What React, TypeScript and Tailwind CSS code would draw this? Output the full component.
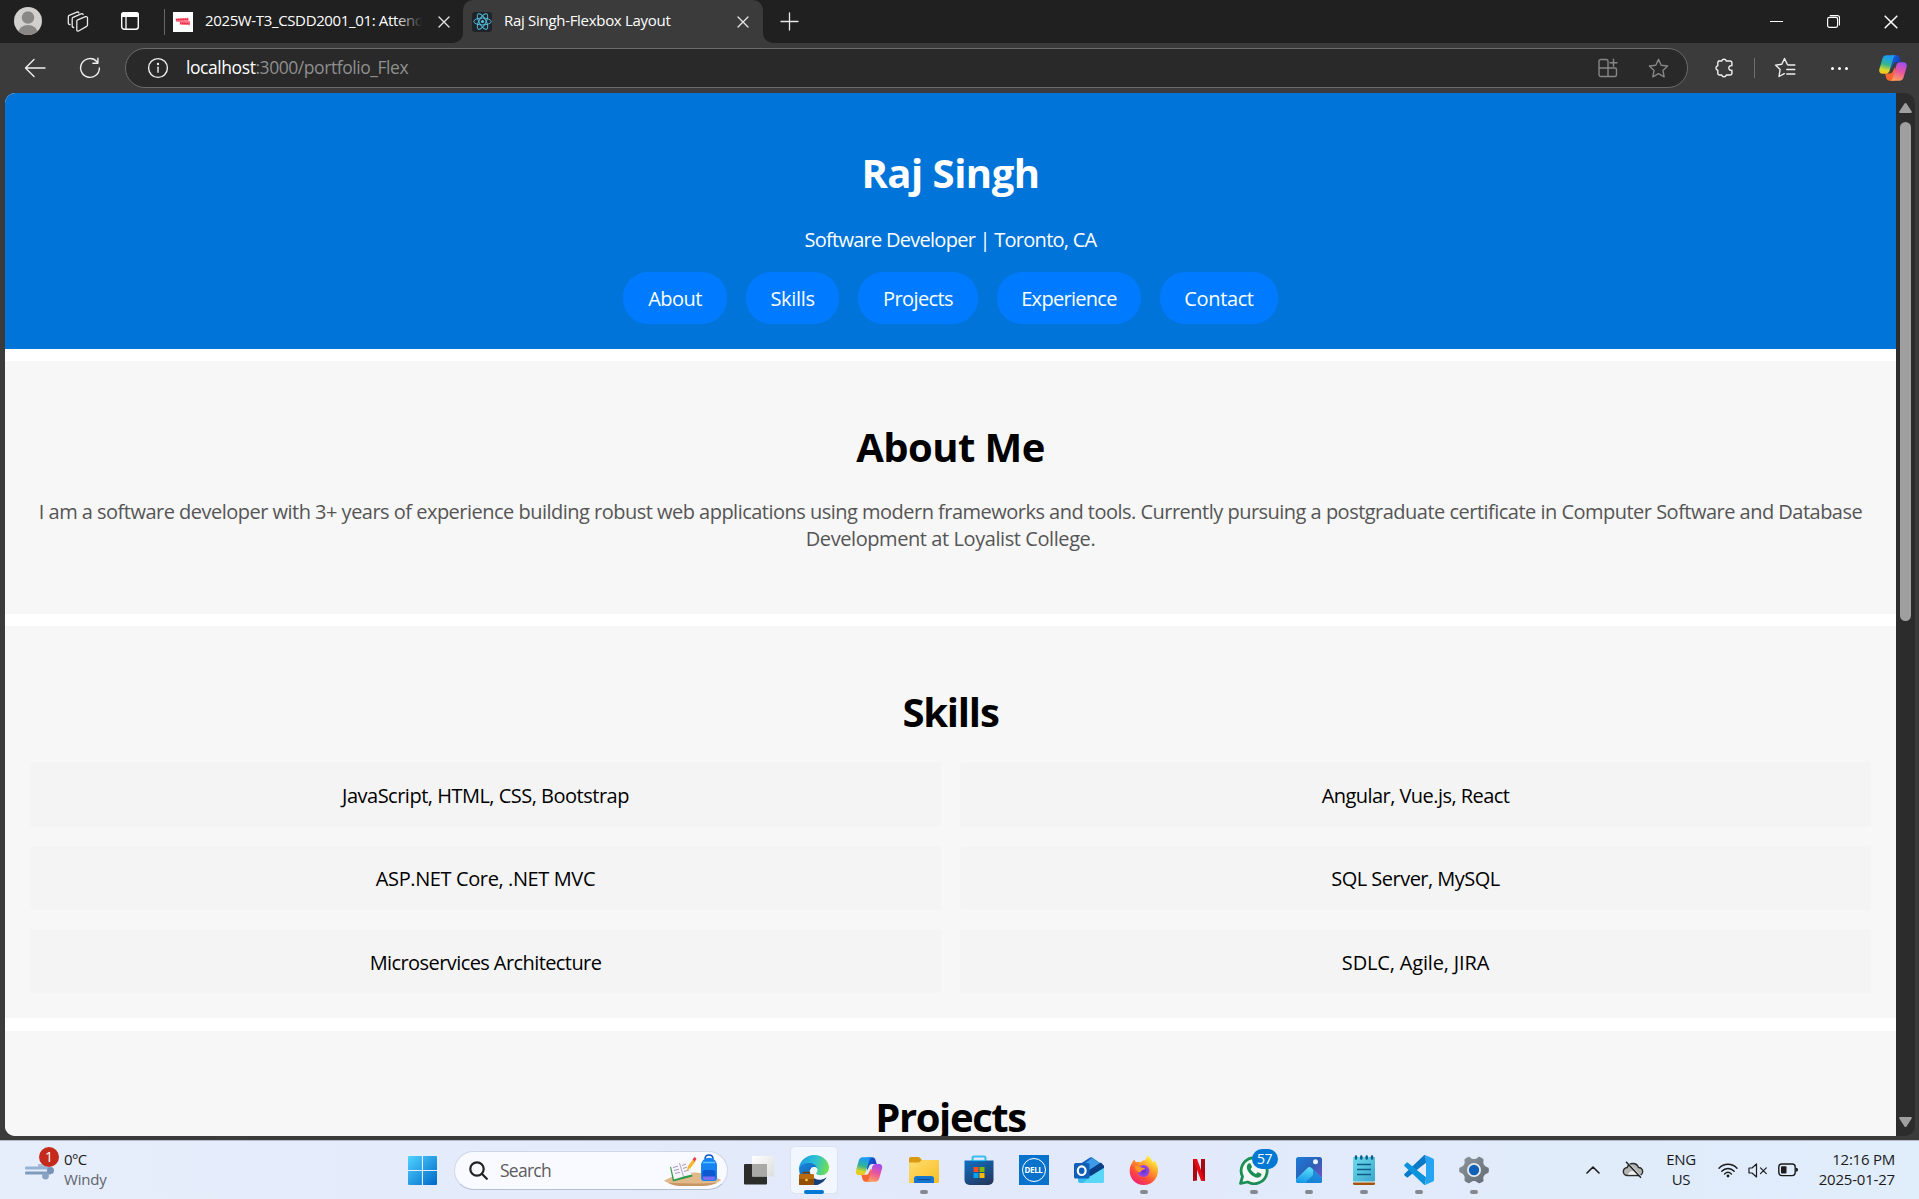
import React from 'react';
import type { ReactNode } from 'react';

/* ---------- Browser chrome icons ---------- */

const stroke = { fill: 'none', stroke: 'currentColor', strokeLinecap: 'round', strokeLinejoin: 'round' } as const;

function Close({ size = 12, className = '' }: { size?: number; className?: string }) {
  return (
    <svg width={size} height={size} viewBox="0 0 12 12" className={className} {...stroke} strokeWidth="1.3">
      <path d="M1 1l10 10M11 1L1 11" />
    </svg>
  );
}

function Workspaces() {
  return (
    <svg width="22" height="22" viewBox="0 0 22 22" {...stroke} strokeWidth="1.3">
      <path d="M9.8 10.1c0-.6.3-1 .9-1.3l7.8-3.1c1-.4 2 .2 2 1.2v7.2c0 .6-.3 1-.9 1.3l-8 4.6c-.9.4-1.8-.1-1.8-1.1z" />
      <path d="M6.7 16.5c-.8 0-1.5-.4-1.5-1.4V7.7c0-.6.3-1.1.9-1.4l8-3.5c.9-.3 1.7 0 2 .8" />
      <path d="M3.1 13.5c-.9 0-1.8-.5-1.8-1.5V5.7c0-.6.3-1.1.9-1.4l7.7-3.2c.9-.3 1.7 0 2 .8" />
    </svg>
  );
}

function TabActions() {
  return (
    <svg width="18" height="18" viewBox="0 0 18 18" className="text-white">
      <rect x=".7" y=".7" width="16.6" height="16.6" rx="2.5" {...stroke} strokeWidth="1.4" />
      <path d="M0 5V3a3 3 0 013-3h12a3 3 0 013 3v2z" fill="currentColor" />
      <path d="M5 5v12" {...stroke} strokeWidth="1.3" />
    </svg>
  );
}

function ReactLogo() {
  return (
    <span className="flex size-5 items-center justify-center rounded-[3px] bg-[#20232a]">
      <svg width="19" height="19" viewBox="-12 -12 24 24" fill="none" stroke="#53c1de" strokeWidth="1.2">
        <circle r="2" fill="#53c1de" stroke="none" />
        <ellipse rx="11" ry="4.3" />
        <ellipse rx="11" ry="4.3" transform="rotate(60)" />
        <ellipse rx="11" ry="4.3" transform="rotate(120)" />
      </svg>
    </span>
  );
}

function CollegeFavicon() {
  return (
    <span className="flex size-5 flex-col items-center justify-center bg-white">
      <svg width="18" height="10" viewBox="0 0 18 10">
        <path d="M1.5 1.5l13-.8v3l1.5.3v4.2L6 7.800V5.200L2 4.500z" fill="#ff7a8c" />
        <path d="M2 2.700l12-.4M6 6l9.500.6" stroke="#e8213f" strokeWidth="1.400" strokeDasharray="1.600 .5" />
      </svg>
    </span>
  );
}

function CopilotLogo({ id, className }: { id: string; className: string }) {
  return (
    <svg viewBox="0 0 28 26" className={className}>
      <defs>
        <linearGradient id={id + 'l'} x1=".5" y1="0" x2=".3" y2="1">
          <stop offset=".1" stopColor="#1c9df0" />
          <stop offset=".5" stopColor="#35b58e" />
          <stop offset=".8" stopColor="#d9d72b" />
          <stop offset="1" stopColor="#f6c31b" />
        </linearGradient>
        <linearGradient id={id + 'r'} x1=".7" y1="0" x2=".4" y2="1">
          <stop offset="0" stopColor="#a04df2" />
          <stop offset=".5" stopColor="#e8559f" />
          <stop offset="1" stopColor="#ff9d5c" />
        </linearGradient>
        <linearGradient id={id + 't'} x1="0" y1="0" x2="1" y2=".6">
          <stop offset="0" stopColor="#1668dd" />
          <stop offset="1" stopColor="#1436b8" />
        </linearGradient>
      </defs>
      <path d="M12 .3h5.500c1.700 0 2.700 1 3.200 2.500l1.300 4.500h-4.500c-2 0-3 1-3.600 3L12 14z" fill={'url(#' + id + 't)'} />
      <path d="M16 25.700h-5.500c-1.700 0-2.700-1-3.200-2.500L6 18.500h4.500c2 0 3-1 3.600-3L16 12z" fill="#f4652f" />
      <path d="M7.500.3H17c-1.700.3-2.400 1.700-3 3.700l-3.300 11.500c-.6 2-1.700 3.200-3.900 3.200H3.500c-2.500 0-3.800-1.900-3.100-4.700L3.300 4C4 1.500 5.300.3 7.500.3z" fill={'url(#' + id + 'l)'} />
      <path d="M20.500 25.700H11c1.700-.3 2.400-1.700 3-3.700l3.300-11.500c.6-2 1.700-3.200 3.900-3.200h3.300c2.500 0 3.800 1.900 3.100 4.700L24.700 22c-.7 2.500-2 3.700-4.200 3.700z" fill={'url(#' + id + 'r)'} />
    </svg>
  );
}

const STAR = 'M10 1.300l2.600 5.600 6.100.7-4.500 4.200 1.200 6.100-5.400-3-5.400 3 1.200-6.100L1.300 7.600l6.100-.7z';

/* ---------- Browser chrome ---------- */

function TabStrip() {
  return (
    <div className="flex h-[43px] bg-[#3b3b3b] text-[#e8e8e8]">
      <div className="flex w-[463px] items-center rounded-br-[10px] bg-[#202020] pl-[14px]">
        <svg width="28" height="28" viewBox="0 0 28 28" className="mb-px">
          <clipPath id="avatar"><circle cx="14" cy="14" r="14" /></clipPath>
          <g clipPath="url(#avatar)">
            <rect width="28" height="28" fill="#d2d0ce" />
            <circle cx="14" cy="10.500" r="6.200" fill="#8a8886" />
            <ellipse cx="14" cy="25.500" rx="9.500" ry="7.500" fill="#8a8886" />
          </g>
        </svg>
        <div className="ml-[25px] flex"><Workspaces /></div>
        <div className="ml-8 flex pb-px"><TabActions /></div>
        <div className="ml-[25px] h-[26px] w-px bg-[#666]" />
        <div className="ml-2 flex"><CollegeFavicon /></div>
        <div className="relative ml-3 w-[224px] overflow-hidden pb-1 text-[15px] leading-5 tracking-[-0.36px] whitespace-nowrap text-white">
          2025W-T3_CSDD2001_01: Attenda
          <div className="absolute inset-y-0 right-0 w-[34px] bg-linear-to-r from-transparent to-[#202020] to-80%" />
        </div>
        <Close className="ml-[9px]" />
      </div>
      <div className="w-[300px] bg-[#202020]">
        <div className="flex h-full items-center rounded-t-[10px] bg-[#3b3b3b] pl-[9px]">
          <ReactLogo />
          <div className="ml-3 w-[233px] pb-1 text-[15px] leading-5 tracking-[-0.3px] whitespace-nowrap text-white">Raj Singh-Flexbox Layout</div>
          <Close />
        </div>
      </div>
      <div className="flex flex-1 items-center rounded-bl-[10px] bg-[#202020] pl-[17px]">
        <svg width="19" height="19" viewBox="0 0 19 19" {...stroke} strokeWidth="1.3" className="mb-px"><path d="M9.500 1v17M1 9.500h17" /></svg>
        <div className="ml-auto flex items-center gap-11 pr-[21px] text-white">
          <div className="h-px w-[13px] bg-white" />
          <svg width="13" height="13" viewBox="0 0 13 13" {...stroke} strokeWidth="1.2">
            <rect x=".6" y="2.4" width="10" height="10" rx="1.8" />
            <path d="M3.200.6h7.300a2 2 0 012 2v7.200" />
          </svg>
          <Close size={14} />
        </div>
      </div>
    </div>
  );
}

function Toolbar() {
  return (
    <div className="flex h-[50px] items-center bg-[#3b3b3b] text-[#f0f0f0]">
      <svg width="22" height="20" viewBox="0 0 22 20" {...stroke} strokeWidth="1.4" className="mb-px ml-6">
        <path d="M21 10H1.500M10 1.500L1.500 10l8.500 8.500" />
      </svg>
      <svg width="22" height="22" viewBox="0 0 22 22" {...stroke} strokeWidth="1.4" className="ml-[33px]">
        <path d="M20.400 11A9.400 9.400 0 1118 4.700M18.900 1.300v5h-5" />
      </svg>
      <div className="ml-6 flex h-10 w-[1563px] items-center rounded-full border border-[#6b6b6b] bg-[#292929] pl-[21px]">
        <svg width="22" height="22" viewBox="0 0 22 22" {...stroke} strokeWidth="1.4">
          <circle cx="11" cy="11" r="9.4" />
          <path d="M11 10.200v5" />
          <circle cx="11" cy="7" r=".5" fill="currentColor" />
        </svg>
        <div className="ml-[17px] pb-[2px] text-[17.5px] leading-6 tracking-[-0.44px] whitespace-pre text-[#8f8f8f]">
          <span className="tracking-[-0.43px] text-white">localhost</span>:3000/portfolio_Flex
        </div>
        <div className="ml-auto flex items-center gap-[30px] pr-[18px] text-[#868686]">
          <svg width="20" height="20" viewBox="0 0 20 20" {...stroke} strokeWidth="1.4">
            <path d="M10 18.500H3a2 2 0 01-2-2V3.500a2 2 0 012-2h5a2 2 0 012 2v15M1 10h16a1.500 1.500 0 011.500 1.500v5a2 2 0 01-2 2H10M15.500 1.300v7M12 4.800h7" />
          </svg>
          <svg width="21" height="21" viewBox="0 0 20 20" {...stroke} strokeWidth="1.3"><path d={STAR} /></svg>
        </div>
      </div>
      <svg width="20" height="20" viewBox="0 0 20 20" {...stroke} strokeWidth="1.4" className="ml-[26px]">
        <path d="M4.500 3h3.200a2.400 2.400 0 014.600 0h3.900a1.700 1.700 0 011.700 1.700v3a2.400 2.400 0 100 4.600v3a1.700 1.700 0 01-1.700 1.700h-3.900a2.400 2.400 0 01-4.600 0H5.500a1.700 1.700 0 01-1.700-1.700v-3.100a2.300 2.300 0 010-4.500V4.700A1.700 1.700 0 015.500 3" />
      </svg>
      <div className="ml-5 h-5 w-px bg-[#6e6e6e]" />
      <svg width="22" height="22" viewBox="0 0 22 22" {...stroke} strokeWidth="1.4" className="ml-[19px]">
        <path d="M13.400 7.500L10.500 1.500 7.800 7.200l-6.300.9 4.600 4.400L5 19.500l5.300-2.800M14 8h6.800M12.800 12.500h8M12.800 17h8" />
      </svg>
      <div className="ml-[35px] flex gap-1">
        <i className="size-[3px] rounded-full bg-white" />
        <i className="size-[3px] rounded-full bg-white" />
        <i className="size-[3px] rounded-full bg-white" />
      </div>
      <CopilotLogo id="edge-copilot" className="ml-[31px] h-[26px] w-7" />
    </div>
  );
}

function Scrollbar() {
  return (
    <div className="flex w-[19px] flex-col items-center rounded-r-[10px] bg-[#2c2c2c] pt-[10px] pb-[9px]">
      <svg width="13" height="10" viewBox="0 0 13 10" fill="#9f9f9f"><path d="M6.500 0c.4 0 .8.2 1 .6l5.200 8c.4.7 0 1.400-.8 1.400H1.100C.3 10-.1 9.300.3 8.600l5.200-8c.2-.4.6-.6 1-.6z" /></svg>
      <div className="mt-[9px] h-[499px] w-[11px] rounded-full bg-[#9f9f9f]" />
      <svg width="13" height="10" viewBox="0 0 13 10" fill="#9f9f9f" className="mt-auto"><path d="M6.500 10c.4 0 .8-.2 1-.6l5.200-8C13.100.7 12.700 0 11.900 0H1.100C.3 0-.1.7.3 1.400l5.200 8c.2.4.6.6 1 .6z" /></svg>
    </div>
  );
}

/* ---------- Portfolio page ---------- */

const NAV = [
  { label: 'About', style: 'w-[104px] tracking-[-0.54px]' },
  { label: 'Skills', style: 'w-[93px] tracking-[-0.33px]' },
  { label: 'Projects', style: 'w-[120px] tracking-[-0.60px]' },
  { label: 'Experience', style: 'w-[144px] tracking-[-0.70px]' },
  { label: 'Contact', style: 'w-[118px] tracking-[-0.37px]' },
];

const SKILLS = [
  { label: 'JavaScript, HTML, CSS, Bootstrap', style: 'tracking-[-0.50px] pt-px' },
  { label: 'Angular, Vue.js, React', style: 'tracking-[-0.55px] pt-px' },
  { label: 'ASP.NET Core, .NET MVC', style: 'tracking-[-0.39px]' },
  { label: 'SQL Server, MySQL', style: 'tracking-[-0.52px]' },
  { label: 'Microservices Architecture', style: 'tracking-[-0.58px] pt-[2px]' },
  { label: 'SDLC, Agile, JIRA', style: 'tracking-[-0.16px] pt-[2px]' },
];

function Portfolio() {
  return (
    <main className="flex-1 overflow-hidden rounded-bl-[10px] rounded-tl-[10px] bg-white text-center text-[20px] leading-[27px]">
      <header className="flex h-[256px] flex-col items-center bg-[#0074d9] pt-[53px] text-white">
        <h1 className="text-[40px] leading-[54px] font-bold tracking-[-0.5px]">Raj Singh</h1>
        <p className="mt-[26px] tracking-[-0.73px]">Software Developer | Toronto, CA</p>
        <nav className="mt-[19px] flex gap-[19px]">
          {NAV.map(({ label, style }) => (
            <a key={label} className={'flex h-[52px] items-center justify-center rounded-[25px] bg-[#007bff] ' + style}>{label}</a>
          ))}
        </nav>
      </header>
      <section className="mt-3 h-[253px] bg-[#f7f7f7] px-[25px] pt-[59px]">
        <h2 className="text-[40px] leading-[54px] font-bold tracking-[-0.56px]">About Me</h2>
        <p className="mt-6 text-[#555]">
          <span className="block tracking-[-0.515px] whitespace-nowrap">I am a software developer with 3+ years of experience building robust web applications using modern frameworks and tools. Currently pursuing a postgraduate certificate in Computer Software and Database</span>
          <span className="block tracking-[-0.42px]">Development at Loyalist College.</span>
        </p>
      </section>
      <section className="mt-3 h-[392px] bg-[#f7f7f7] px-[25px] pt-[59px]">
        <h2 className="text-[40px] leading-[54px] font-bold tracking-[-1.2px]">Skills</h2>
        <div className="mt-[23px] grid grid-cols-2 grid-rows-[65px_64px_64px] gap-[19px]">
          {SKILLS.map(({ label, style }) => (
            <div key={label} className={'flex items-center justify-center rounded-[3px] bg-[#f4f4f4] text-black ' + style}>{label}</div>
          ))}
        </div>
      </section>
      <section className="mt-[13px] h-[392px] bg-[#f7f7f7] px-[25px] pt-[59px]">
        <h2 className="text-[40px] leading-[54px] font-bold tracking-[-1.4px]">Projects</h2>
      </section>
    </main>
  );
}

/* ---------- Taskbar ---------- */

function EdgeIcon() {
  return (
    <svg width="30" height="30" viewBox="0 0 30 30">
      <defs>
        <linearGradient id="eg1" x1="0" y1=".3" x2="1" y2=".5"><stop stopColor="#1a9ce8" /><stop offset=".55" stopColor="#2fc3cf" /><stop offset="1" stopColor="#6fe04b" /></linearGradient>
        <linearGradient id="eg2" x1="0" y1="0" x2=".6" y2="1"><stop stopColor="#1a86dc" /><stop offset="1" stopColor="#0d5fb0" /></linearGradient>
      </defs>
      <path d="M0 13C1 5.500 7.500 0 15 0c9 0 15 6.200 15 12.500 0 4.500-3.500 7.700-8 7.700-3.500 0-5-1.300-5-2.200 0-.8 1.300-1.300 1.300-3.500 0-3-3-5.500-7.300-5.500C6 9 2 10.500 0 13z" fill="url(#eg1)" />
      <path d="M0 13c2-3.500 6-5 10-5 4.600 0 7.800 2.600 8.200 5.700-1-1.100-2.300-1.700-3.900-1.300-3.300.8-4.600 4.600-3.500 8.600 1.200 4.500 5 7.500 9.400 8.200-9 2.600-20.200-3-20.200-16.200z" fill="url(#eg2)" />
      <circle cx="15" cy="15.300" r="3.400" fill="#f2f6fe" />
      <path d="M13 21c3 4.500 9 5.300 14.500 1.200-2 4.500-6.700 7.800-12 7.800-3 0-3-5-2.500-9z" fill="#173f79" />
      <rect x="0" y="19" width="15" height="11" rx="1" fill="#b86a0c" />
      <path d="M0 24h15v5a1 1 0 01-1 1H1a1 1 0 01-1-1z" fill="#925006" />
      <path d="M4.500 19v-1.500h6V19" fill="none" stroke="#6d3c08" strokeWidth="1.3" />
      <circle cx="7.500" cy="25" r="1.300" fill="#ffcf4a" />
    </svg>
  );
}

function FolderIcon() {
  return (
    <svg width="30" height="28" viewBox="0 0 30 28">
      <defs><linearGradient id="fo" x1="0" y1="0" x2="1" y2="1"><stop stopColor="#ffdd6e" /><stop offset="1" stopColor="#f9be25" /></linearGradient></defs>
      <path d="M0 2.500A1.500 1.500 0 011.500 1H10l3 3h15.500A1.500 1.500 0 0130 5.500V12H0z" fill="#dc9a12" />
      <path d="M0 6.500h10L13 4h15.500A1.500 1.500 0 0130 5.500V26a1 1 0 01-1 1H1a1 1 0 01-1-1z" fill="url(#fo)" />
      <path d="M5 27v-4.500A2.500 2.500 0 017.500 20h15a2.500 2.500 0 012.500 2.500V27z" fill="#1476cf" />
      <path d="M8.500 23.500h13" stroke="#0b4f96" strokeWidth="1.2" />
    </svg>
  );
}

function StoreIcon() {
  return (
    <svg width="30" height="30" viewBox="0 0 30 30">
      <defs><linearGradient id="st" x1=".2" y1="0" x2=".8" y2="1"><stop stopColor="#0f6cbd" /><stop offset="1" stopColor="#24375e" /></linearGradient></defs>
      <path d="M8.500 8V3A1.500 1.500 0 0110 1.500h10A1.500 1.500 0 0121.500 3v5" fill="none" stroke="#37bdf0" strokeWidth="2" />
      <path d="M.5 5.500h29V25a5 5 0 01-5 5h-19a5 5 0 01-5-5z" fill="url(#st)" />
      <path d="M8.500 5.500h13" stroke="#37bdf0" strokeWidth="1.2" />
      <path d="M9.500 12h5v5h-5z" fill="#f25022" /><path d="M15.500 12h5v5h-5z" fill="#7fba00" />
      <path d="M9.500 18h5v5h-5z" fill="#00a4ef" /><path d="M15.500 18h5v5h-5z" fill="#ffb900" />
    </svg>
  );
}

function DellIcon() {
  return (
    <div className="flex size-[30px] items-center justify-center bg-[#0672cb] text-white">
      <div className="flex size-6 items-center justify-center rounded-full border-[1.5px] border-white text-[8px] leading-none font-bold tracking-[-0.4px]">DELL</div>
    </div>
  );
}

function OutlookIcon() {
  return (
    <svg width="30" height="30" viewBox="0 0 30 30">
      <path d="M3 11L16 2.500a2 2 0 012.200 0L30 11v9H3z" fill="#1666c0" />
      <path d="M9 10L18 3l8 5-12 9z" fill="#3d9be8" />
      <path d="M12 17L27 7.500 30 11v3L16 22z" fill="#0a3f86" />
      <path d="M4 17l13 4L30 13v12.500a2.500 2.500 0 01-2.500 2.500h-21A2.500 2.500 0 014 25.500z" fill="#38bdf0" />
      <path d="M17 21l13-8v12.500a2.500 2.500 0 01-2.500 2.500H9z" fill="#5ad7f7" />
      <rect x="0" y="8" width="15.500" height="15.500" rx="1.500" fill="#0f5fb8" />
      <ellipse cx="7.700" cy="15.700" rx="3.900" ry="4.300" fill="none" stroke="#fff" strokeWidth="2.200" />
    </svg>
  );
}

function FirefoxIcon() {
  return (
    <svg width="30" height="30" viewBox="0 0 30 30">
      <defs>
        <linearGradient id="ff" x1=".85" y1="0" x2=".2" y2="1"><stop offset=".1" stopColor="#fff24a" /><stop offset=".4" stopColor="#ff9a26" /><stop offset=".7" stopColor="#ff4a3d" /><stop offset="1" stopColor="#e81a7e" /></linearGradient>
        <radialGradient id="fp"><stop stopColor="#5a2fd8" /><stop offset="1" stopColor="#a24ae0" /></radialGradient>
      </defs>
      <path d="M5.500 4.500c.3 1.200.7 2 1.700 2.700 1.500-.4 3-.3 4.500.2 1.500-2 3-2.300 4-2.200C17.500 3.500 18 2 18.200.5c3.300 1.600 4.900 4 5.300 7 1.100-.7 1.500-1.500 1.700-2.500C28 8 29 11.500 29 15.500 29 24 22.500 30 14.800 30 7 30 .7 24 .7 16c0-4 1-6.500 2.500-8 .3-1.500 1-2.700 2.300-3.500z" fill="url(#ff)" />
      <circle cx="14.500" cy="16" r="6" fill="url(#fp)" />
      <path d="M6 11.500c3-1 5 .2 6.500 1 1.500.7 3.500.2 3.500 1-.3 1-3 1.400-3.800 2.500-.8 1.300-2.200 1.500-3.200 1C7.500 16 6 14 6 11.500z" fill="#ff9428" />
    </svg>
  );
}

function NetflixIcon() {
  return (
    <svg width="14" height="22" viewBox="0 0 14 22">
      <path d="M1 0h4v21.500L1 22zM9 0h4v22l-4-.5z" fill="#a80a12" />
      <path d="M1 0h4l8 22-4-.5z" fill="#e50914" />
    </svg>
  );
}

function WhatsAppIcon() {
  return (
    <div className="relative size-[30px]">
      <svg width="30" height="30" viewBox="0 0 30 30">
        <path d="M1.500 28.500l2-7A13 13 0 118.700 27z" fill="#f4f8f6" stroke="#1b8f53" strokeWidth="2.800" strokeLinejoin="round" />
        <path d="M10.500 8.200c.5 0 .9 0 1.200.7l1.200 2.700c.2.500 0 .9-1.300 2.400 1.400 2.500 3 3.900 5.300 4.900.8-.6 1.500-1.700 1.900-1.700.5 0 3.500 1.500 3.700 1.800.3 1.600-1.500 3.700-4 3.700-4.700-.3-11-6.200-10.700-11 .1-1.700 1.500-3.500 2.700-3.500z" fill="#1b8f53" />
      </svg>
      <div className="absolute -top-[6px] left-[13px] flex h-5 w-[26px] items-center justify-center rounded-full bg-[#0078d4] text-[14px] leading-none tracking-[-0.5px] text-white">57</div>
    </div>
  );
}

function PhotosIcon() {
  return (
    <svg width="26" height="26" viewBox="0 0 26 26">
      <defs>
        <linearGradient id="ph" x1="0" y1="0" x2="1" y2="1"><stop stopColor="#1b7ddb" /><stop offset=".5" stopColor="#2b5fb8" /><stop offset="1" stopColor="#8a4fc0" /></linearGradient>
        <linearGradient id="pm" x1=".6" y1="0" x2=".3" y2="1"><stop stopColor="#5ee0fa" /><stop offset="1" stopColor="#1193e6" /></linearGradient>
        <clipPath id="pc"><rect width="26" height="26" rx="2.500" /></clipPath>
      </defs>
      <g clipPath="url(#pc)">
        <rect width="26" height="26" fill="url(#ph)" />
        <path d="M-1 23l12.500-12a3 3 0 014 0L27 22v5H-1z" fill="url(#pm)" />
        <path d="M17 12.500l10 9.500v5H12l-2-2 7-7z" fill="#1378d0" opacity=".75" />
        <circle cx="19.500" cy="4.800" r="2.500" fill="#e8f2fd" />
      </g>
    </svg>
  );
}

function NotepadIcon() {
  return (
    <svg width="22" height="30" viewBox="0 0 22 30">
      <defs><linearGradient id="np" x1="0" y1="0" x2="1" y2="1"><stop stopColor="#6fdcec" /><stop offset="1" stopColor="#3aa6cd" /></linearGradient></defs>
      <path d="M0 26h22v2.500a1.500 1.500 0 01-1.500 1.500h-19A1.500 1.500 0 010 28.500z" fill="#a5540f" />
      <path d="M0 25h22v2.500H0z" fill="#e9f4f7" />
      <rect y="2" width="22" height="24.500" rx="1" fill="url(#np)" />
      <path d="M4 9.500h14M4 14.500h14M4 19.500h14" stroke="#0c5c86" strokeWidth="1.500" />
      <path d="M3 1.500v2M8.300 1.500v2M13.700 1.500v2M19 1.500v2" stroke="#0c5c86" strokeWidth="2.400" strokeLinecap="round" />
    </svg>
  );
}

function VsCodeIcon() {
  return (
    <svg width="30" height="30" viewBox="0 0 30 30">
      <path d="M21.500.2c-.7-.3-1.500 0-2 .5L.6 18.800c-.6.500-.6 1.300 0 1.800l1.700 1.500c.4.400 1.100.4 1.600.1L22 8z" fill="#0a79c8" />
      <path d="M21.500 29.800c-.7.300-1.500 0-2-.5L.6 11.200c-.6-.5-.6-1.300 0-1.800l1.700-1.500c.4-.4 1.100-.4 1.600-.1L22 22z" fill="#0b93de" />
      <path d="M21.500.2L29 3.500c.6.300 1 .9 1 1.600v19.800c0 .7-.4 1.300-1 1.600l-7.500 3.300c-.5 0 .5-.8.5-1.800V2c0-1-1-1.800-.5-1.800z" fill="#25a4f2" />
      <path d="M22 8v14l-9-7z" fill="#e5ebfb" />
    </svg>
  );
}

function SettingsIcon() {
  return (
    <svg width="30" height="30" viewBox="0 0 30 30">
      <defs><linearGradient id="se" x1="0" y1="0" x2="1" y2="1"><stop stopColor="#8e979e" /><stop offset="1" stopColor="#606a72" /></linearGradient></defs>
      <path d="M6.300 3.600L9 2c.8-.5 1.700-.3 2.300.4 2 2.200 5.400 2.200 7.400 0 .6-.7 1.500-.9 2.300-.4l2.700 1.600c.7.400 1 1.300.8 2.100-.8 2.900.9 5.700 3.800 6.500.9.200 1.500.9 1.500 1.700v2.600c0 .8-.6 1.500-1.500 1.700-2.900.8-4.600 3.600-3.800 6.500.2.800-.1 1.700-.8 2.100L21 28c-.8.500-1.700.3-2.300-.4-2-2.200-5.400-2.200-7.400 0-.6.700-1.500.9-2.300.4l-2.700-1.600c-.7-.4-1-1.300-.8-2.100.8-2.900-.9-5.700-3.800-6.500-.9-.2-1.500-.9-1.500-1.700v-2.200c0-.8.6-1.500 1.500-1.700 2.900-.8 4.600-3.600 3.800-6.500-.2-.8.1-1.700.8-2.100z" fill="url(#se)" />
      <circle cx="15" cy="15" r="7" fill="#e8ecf0" />
      <circle cx="15" cy="15" r="5.200" fill="#1160b7" />
    </svg>
  );
}

const APPS: { name: string; icon: ReactNode; state?: 'active' | 'open' }[] = [
  { name: 'edge', icon: <EdgeIcon />, state: 'active' },
  { name: 'copilot', icon: <CopilotLogo id="task-copilot" className="mb-px h-[25px] w-7" /> },
  { name: 'explorer', icon: <FolderIcon />, state: 'open' },
  { name: 'store', icon: <StoreIcon /> },
  { name: 'dell', icon: <DellIcon /> },
  { name: 'outlook', icon: <OutlookIcon /> },
  { name: 'firefox', icon: <FirefoxIcon />, state: 'open' },
  { name: 'netflix', icon: <NetflixIcon /> },
  { name: 'whatsapp', icon: <WhatsAppIcon />, state: 'open' },
  { name: 'photos', icon: <PhotosIcon />, state: 'open' },
  { name: 'notepad', icon: <NotepadIcon />, state: 'open' },
  { name: 'vscode', icon: <VsCodeIcon />, state: 'open' },
  { name: 'settings', icon: <SettingsIcon />, state: 'open' },
];

function SearchBox() {
  return (
    <div className="ml-[17px] flex h-[39px] w-[274px] items-center rounded-full border border-[#cfd8e8] border-b-[#b4bfd2] bg-[#f8faff] pl-[14px]">
      <svg width="19" height="19" viewBox="0 0 19 19" {...stroke} strokeWidth="2.200" className="text-[#222]">
        <circle cx="8" cy="8" r="6.700" /><path d="M13 13l4.800 4.800" />
      </svg>
      <div className="ml-[12px] text-[17.5px] leading-6 tracking-[-0.75px] text-[#5c5c5c]">Search</div>
      <svg width="57" height="32" viewBox="0 0 57 32" className="mr-[6px] ml-auto">
        <path d="M0 26.500c6-2 12-7.500 24-7.500 12-2 22 2 27 4.500 4 1 6 2 6 3-4 2-8 4-14 4.500H14C9 30.500 4 30 0 26.500z" fill="#e2b98b" />
        <path d="M4 28.500c12 1 34 1.500 50 0-5 2-9 3.500-15 3.500H16c-5 0-9-1.500-12-3.500z" fill="#c99765" />
        <path d="M6 13l18-5 4.500 14.500L9 27.500z" fill="#2f9a4c" />
        <path d="M6.500 10.500l9-1.500 8.500-3 4 14.500-8.500 2-9.500 3z" fill="#f7f5fb" />
        <path d="M15.500 9l4 13.500" stroke="#9c92ac" strokeWidth=".8" />
        <path d="M9 13.500l5-1.300M10 16.500l5-1.300M11 19.500l5-1.300M18 11.500l4-1.500M19 14.500l4-1.500M20 17.500l5-1.500" stroke="#8c86a0" strokeWidth=".8" />
        <path d="M23 16.500l1-4.500 5-6.500 2.500 2-5 6.500z" fill="#f7b52f" />
        <path d="M28.500 5.500l1.500-2c.8-.9 3 .8 2.200 2l-1.400 2z" fill="#e8414d" />
        <path d="M41 5c0-5.500 8-5.500 8 0" fill="none" stroke="#0b57c8" strokeWidth="1.500" />
        <path d="M37 12c0-11 16-11 16 0v12c0 2-1 3-3 3H40c-2 0-3-1-3-3z" fill="#1583f2" />
        <path d="M39 8.500h12" stroke="#5cc4ff" strokeWidth="1.500" />
        <rect x="38.500" y="16" width="13" height="9.500" rx="3" fill="#0b58cf" />
        <path d="M39 22.500h12v1.500a2 2 0 01-2 2h-8a2 2 0 01-2-2z" fill="#7d6df5" />
      </svg>
    </div>
  );
}

function Taskbar() {
  return (
    <footer className="flex h-[59px] items-center border-t border-[#b3b9c6] bg-linear-to-r from-[#e6edfb] via-[#e2e9fa] to-[#e0edfb] text-[15px] leading-5 text-[#1b1b1b]">
      <div className="relative ml-[25px] flex w-[383px] items-center">
        <svg width="30" height="16" viewBox="0 0 30 16" className="mt-[3px]">
          <path d="M13 0h9v4h-9z" fill="#a9bdd6" />
          <rect y="2.500" width="24" height="3" rx="1" fill="#93b4d6" />
          <rect y="7.500" width="26" height="3" rx="1" fill="#7e9bbd" />
          <circle cx="25.500" cy="6.500" r="3.500" fill="#7693b5" />
          <circle cx="20.500" cy="12" r="3.400" fill="#86a3c4" />
        </svg>
        <div className="absolute -top-[2px] left-[14px] flex size-5 items-center justify-center rounded-full bg-[#c42b1c] text-[14px] leading-none text-white">1</div>
        <div className="ml-[9px] pb-[2px]">
          <div className="tracking-[-0.6px]">0°C</div>
          <div className="tracking-[-0.2px] text-[#5f646c]">Windy</div>
        </div>
      </div>
      <svg width="29" height="29" viewBox="0 0 29 29">
        <defs><linearGradient id="win" x1="0" y1="0" x2="1" y2="1"><stop stopColor="#4fd3ff" /><stop offset="1" stopColor="#0068c8" /></linearGradient></defs>
        <path d="M1 0h12.900v14H0V1a1 1 0 011-1zM15 0h13a1 1 0 011 1v13H15zM0 15h13.900v14H1a1 1 0 01-1-1zM15 15h14v13a1 1 0 01-1 1H15z" fill="url(#win)" />
      </svg>
      <SearchBox />
      <svg width="30" height="29" viewBox="0 0 30 29" className="ml-4">
        <defs><linearGradient id="tv" x1="0" y1="0" x2="1" y2="1"><stop stopColor="#fff" /><stop offset="1" stopColor="#dcdcdc" /></linearGradient></defs>
        <rect x="0" y="8" width="23" height="20.500" rx="1" fill="#2c2c2a" />
        <rect x="8" y="0" width="22" height="20.500" rx="1" fill="url(#tv)" />
        <path d="M8 8h15v12.500H8z" fill="#a9a9a7" />
      </svg>
      <div className="ml-3 flex">
        {APPS.map(({ name, icon, state }) => (
          <div key={name} className="flex w-[55px] justify-center">
            <div className={'relative flex size-12 items-center justify-center rounded-[5px] ' + (state === 'active' ? 'border border-[#dde4f1] bg-[#f2f6fe]' : '')}>
              {icon}
              {state === 'active' && <div className="absolute -bottom-px h-1 w-5 rounded-full bg-[#0078d4]" />}
              {state === 'open' && <div className="absolute bottom-0 h-1 w-2 rounded-full bg-[#85888f]" />}
            </div>
          </div>
        ))}
      </div>
      <div className="ml-auto flex items-center pr-6">
        <svg width="14" height="8" viewBox="0 0 14 8" {...stroke} strokeWidth="1.600"><path d="M1 7l6-6 6 6" /></svg>
        <svg width="22" height="18" viewBox="0 0 22 18" className="ml-[22px]">
          <path d="M5.500 14.500a4 4 0 01-.3-8 6 6 0 0111.300 0 4 4 0 01.3 8z" fill="#b4b4b4" stroke="#2a2a2a" strokeWidth="1.400" />
          <path d="M6 13.700c1-4 6-5 9-1.500l2 1.500z" fill="#eee" />
          <path d="M5.200 1l15 16" stroke="#e4eefb" strokeWidth="1.200" /><path d="M4 .8l15 16" stroke="#1b1b1b" strokeWidth="1.400" />
        </svg>
        <div className="ml-[21px] w-[32px] pb-[2px] text-center tracking-[-0.3px]"><div>ENG</div><div>US</div></div>
        <svg width="20" height="15" viewBox="0 0 20 15" {...stroke} strokeWidth="1.400" className="ml-[21px]">
          <path d="M1 5.200c5-5.300 13-5.300 18 0M3.800 8.200c3.500-3.700 8.900-3.700 12.400 0M6.600 11c2-2 4.800-2 6.800 0" /><circle cx="10" cy="13" r="1.400" fill="currentColor" stroke="none" />
        </svg>
        <svg width="20" height="15" viewBox="0 0 20 15" {...stroke} strokeWidth="1.200" className="ml-[10px]">
          <path d="M1 5h3l4.500-4v13L4 10H1zM12.500 4.800l5.800 5.800M18.300 4.800l-5.800 5.800" />
        </svg>
        <svg width="20" height="14" viewBox="0 0 20 14" className="ml-[10px]">
          <rect x=".8" y="1" width="16.400" height="11.600" rx="3" {...stroke} strokeWidth="1.400" /><rect x="3" y="3.200" width="5.500" height="7.200" rx="1" fill="#1b1b1b" /><path d="M18 4.800c1.300 0 2 .7 2 2s-.7 2-2 2z" fill="#1b1b1b" />
        </svg>
        <div className="ml-[20px] w-[77px] pb-[2px] text-right whitespace-nowrap"><div className="tracking-[-0.24px]">12:16 PM</div><div className="tracking-[-0.19px]">2025-01-27</div></div>
      </div>
    </footer>
  );
}

export default function App() {
  return (
    <div className="flex h-[1199px] w-[1919px] flex-col overflow-hidden bg-[#3b3b3b] font-['Open_Sans','Noto_Sans',sans-serif]">
      <TabStrip />
      <Toolbar />
      <div className="flex h-[1043px] pr-1 pl-[5px]">
        <Portfolio />
        <Scrollbar />
      </div>
      <div className="h-1" />
      <Taskbar />
    </div>
  );
}
